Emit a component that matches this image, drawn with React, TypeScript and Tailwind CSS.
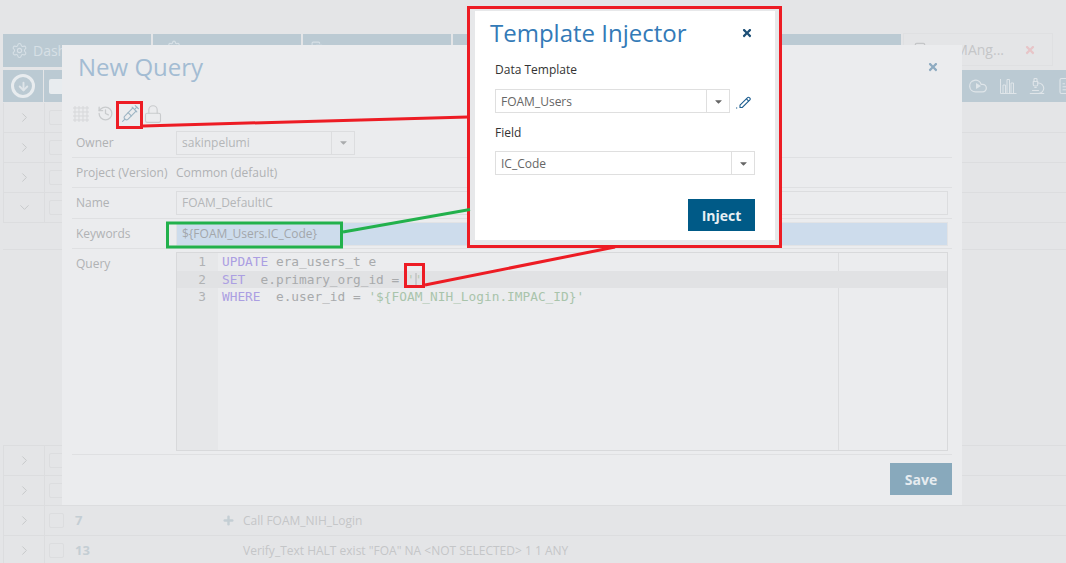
import { Cloud, History, Lock, Microscope, Syringe, FileText, ChevronRight, ChevronDown, ArrowDown, Plus, Settings, Copy } from 'lucide-react';
import { FaCaretDown, FaTimes } from 'react-icons/fa';

const rowsTop = [false, false, false, true];

function Row({ open, children }: { open?: boolean; children?: React.ReactNode }) {
  return (
    <div className="flex h-[30px] shrink-0 border-b border-l border-[#dcdddf]">
      <div className="flex w-[41px] items-center justify-center border-r border-[#dcdddf] text-[#c4c6c8]">
        {open ? <ChevronDown size={15} strokeWidth={1.5} /> : <ChevronRight size={15} strokeWidth={1.5} />}
      </div>
      <div className="flex items-center pl-[4px]">
        <div className="h-[15px] w-[15px] rounded-[2px] border border-[#dcdddf]" />
      </div>
      {children}
    </div>
  );
}

function BarsIcon() {
  return (
    <svg width="18" height="18" viewBox="0 0 18 18" fill="none" stroke="currentColor" strokeWidth="1">
      <path d="M1.5 2v14.5h16" />
      <path d="M4 8h2.5v8.5H4zM8 2.5h2.5v14H8zM12 6h2.5v10.5H12z" />
    </svg>
  );
}

function CloudPlay() {
  return (
    <span className="relative block h-[20px] w-[20px]">
      <Cloud size={20} strokeWidth={1.5} />
      <span className="absolute left-[8px] top-[7px] h-0 w-0 border-y-[3px] border-l-[5px] border-y-transparent border-l-current" />
    </span>
  );
}

function DotGrid() {
  const dots = [];
  for (let y = 0; y < 4; y++) {
    for (let x = 0; x < 4; x++) {
      dots.push(<circle key={`${x}-${y}`} cx={2 + x * 4} cy={2 + y * 4} r="1.2" />);
    }
  }
  return (
    <svg width="16" height="16" viewBox="0 0 16 16" fill="none" stroke="#cfd1d3" strokeWidth="0.8">
      {dots}
    </svg>
  );
}

function PencilIcon() {
  return (
    <svg width="17" height="17" viewBox="0 0 17 17" fill="none" stroke="#1c5d8f" strokeWidth="1.1">
      <path d="M5 12.2L12.6 4.6a1.2 1.2 0 0 1 1.7 0l.6.6a1.2 1.2 0 0 1 0 1.7L7.3 14.5H5z" />
      <path d="M11.4 5.8l2.3 2.3M1 15h1.2" />
    </svg>
  );
}

function Select({ value, width, faded }: { value: string; width: string; faded?: boolean }) {
  return (
    <div className={`flex h-[24px] items-center border ${faded ? 'border-[#dcdddf] text-[#b4b6b8]' : 'border-[#dfdfdf] text-[#666]'} ${width}`}>
      <span className="flex-1 pl-[5px] pt-[1px] text-[12px]">{value}</span>
      <span className={`flex h-full w-[23px] items-center justify-center border-l ${faded ? 'border-[#dcdddf] text-[#a9abad]' : 'border-[#dfdfdf] text-[#666]'}`}>
        <FaCaretDown size={11} />
      </span>
    </div>
  );
}

function FormRow({ label, children, h }: { label: string; children: React.ReactNode; h: string }) {
  return (
    <div className={`flex shrink-0 items-center border-b border-[#dfe0e2] ${h}`}>
      <span className="w-[104px] pl-[4px] text-[12px] text-[#b0b2b4]">{label}</span>
      {children}
    </div>
  );
}

export default function App() {
  return (
    <div className="relative h-[563px] w-[1066px] overflow-hidden bg-[#e4e5e7] font-['Open_Sans',sans-serif]">
      {/* page behind the dialog */}
      <div className="flex h-full flex-col pl-[3px] pt-[34px]">
        <div className="flex h-[33px] shrink-0 gap-[2px] text-[#d7e0e6]">
          <div className="flex w-[148px] items-center gap-[5px] bg-[#bbcad3] pl-[8px] text-[14px]">
            <Settings size={17} strokeWidth={1.5} />
            <span>Dash</span>
          </div>
          <div className="w-[148px] bg-[#bbcad3] pl-[14px] pt-[6px]">
            <Settings size={14} />
          </div>
          <div className="w-[148px] bg-[#bbcad3] pl-[8px] pt-[7px]">
            <Copy size={13} />
          </div>
          <div className="w-[448px] bg-[#bbcad3]" />
          <div className="flex w-[150px] -translate-y-[1px] items-center border border-[#dfe0e2] pl-[10px] text-[14px] text-[#c4c6c8]">
            <Copy size={16} />
            <span className="ml-auto">MAng...</span>
            <FaTimes size={12} className="ml-[20px] mr-[16px] text-[#e7c5c8]" />
          </div>
        </div>
        <div className="mt-[3px] flex h-[32px] shrink-0 items-center bg-[#bbcad3] text-[#dfe5e9]">
          <div className="flex h-full w-[41px] items-center justify-center border-r border-[#e4e5e7]">
            <span className="flex h-[24px] w-[24px] items-center justify-center rounded-full border-[3px] border-[#e8ecef]">
              <ArrowDown size={13} strokeWidth={3.5} />
            </span>
          </div>
          <div className="ml-[5px] h-[15px] w-[15px] rounded-[2px] bg-[#e8ecef]" />
          <div className="-mr-[9px] ml-auto flex items-center gap-[11px]">
            <CloudPlay />
            <BarsIcon />
            <Microscope size={18} strokeWidth={1.5} />
            <FileText size={18} strokeWidth={1.5} />
          </div>
        </div>
        <div className="h-px shrink-0" />
        {rowsTop.map((open, i) => (
          <Row key={i} open={open} />
        ))}
        <div className="h-[27px] shrink-0 border-b border-[#dcdddf]" />
        <div className="h-[196px] shrink-0 border-b border-[#dcdddf]" />
        <Row />
        <Row />
        <Row>
          <span className="ml-[11px] flex h-full w-[147px] items-center text-[13px] font-bold text-[#c4ced4]">7</span>
          <span className="flex h-full items-center">
            <Plus size={13} strokeWidth={4.5} className="text-[#c4ced4]" />
            <span className="ml-[8px] text-[12px] text-[#c4c6c8]">Call FOAM_NIH_Login</span>
          </span>
        </Row>
        <Row>
          <span className="ml-[11px] flex h-full w-[168px] items-center text-[13px] font-bold text-[#c4ced4]">13</span>
          <span className="flex h-full items-center text-[12px] text-[#c4c6c8]">Verify_Text HALT exist "FOA" NA &lt;NOT SELECTED&gt; 1 1 ANY</span>
        </Row>
      </div>

      {/* New Query dialog */}
      <div className="absolute left-[62px] top-[45px] flex h-[460px] w-[900px] flex-col bg-[#ebecee] px-[10px]">
        <div className="flex h-[44px] shrink-0 items-center justify-between pl-[6px] pr-[13px]">
          <h1 className="text-[24px] text-[#a3bcd3]">New Query</h1>
          <FaTimes size={12} className="text-[#8eabc1]" />
        </div>
        <div className="flex h-[39px] shrink-0 items-center pl-[1px] pt-[10px] text-[#c9cbcd]">
          <DotGrid />
          <History size={17} strokeWidth={1.8} className="ml-[8px]" />
          <Syringe size={19} strokeWidth={1.4} className="ml-[7px] text-[#9db5c4]" />
          <Lock size={20} strokeWidth={1.3} className="ml-[3px]" />
        </div>
        <FormRow label="Owner" h="h-[30px]">
          <Select value="sakinpelumi" width="w-[179px]" faded />
        </FormRow>
        <FormRow label="Project (Version)" h="h-[30px]">
          <span className="text-[12px] text-[#b0b2b4]">Common (default)</span>
        </FormRow>
        <FormRow label="Name" h="h-[31px]">
          <div className="mr-[4px] flex h-[24px] flex-1 items-center border border-[#dcdddf] pl-[5px] text-[12px] text-[#b4b6b8]">FOAM_DefaultIC</div>
        </FormRow>
        <FormRow label="Keywords" h="h-[30px]">
          <div className="mr-[4px] flex h-[24px] flex-1 items-center border border-[#e2e3e5] bg-[#cddcec] pl-[5px] text-[12px] text-[#a3a7ab]">{'${FOAM_Users.IC_Code}'}</div>
        </FormRow>
        <div className="flex h-[206px] shrink-0 border-b border-[#dfe0e2] pb-[3px] pt-[3px]">
          <span className="w-[104px] pl-[4px] pt-[3px] text-[12px] text-[#b0b2b4]">Query</span>
          <div className="relative mr-[4px] flex-1 whitespace-pre border border-[#d8d9db] font-['DejaVu_Sans_Mono',monospace] text-[12.8px] leading-[17.5px] text-[#a8aaac]">
            <div className="absolute bottom-0 left-0 top-0 w-[41px] bg-[#e6e7e9]" />
            <div className="absolute bottom-0 right-[108px] top-0 w-px bg-[#dcdddf]" />
            <div className="relative flex">
              <span className="w-[41px] pr-[12px] text-right text-[#b0b2b4]">1</span>
              <span className="pl-[4px]"><span className="text-[#ab9fe2]">UPDATE</span> era_users_t e</span>
            </div>
            <div className="relative flex bg-[#e1e2e4]">
              <span className="w-[41px] pr-[12px] text-right text-[#b0b2b4]">2</span>
              <span className="pl-[4px]"><span className="text-[#ab9fe2]">SET</span>  e.primary_org_id = <span className="text-[#b8c9b4]">'</span><span className="-mr-[2px] inline-block h-[14px] w-[2px] bg-[#c9cacc] align-middle" /><span className="text-[#b8c9b4]">'</span></span>
            </div>
            <div className="relative flex">
              <span className="w-[41px] pr-[12px] text-right text-[#b0b2b4]">3</span>
              <span className="pl-[4px]"><span className="text-[#ab9fe2]">WHERE</span>  e.user_id = <span className="text-[#a9c4ab]">{"'${FOAM_NIH_Login.IMPAC_ID}'"}</span></span>
            </div>
          </div>
        </div>
        <div className="flex justify-end pt-[8px]">
          <button className="h-[32px] w-[62px] bg-[#88a9bc] text-[14px] font-bold text-[#e6ecf0]">Save</button>
        </div>
      </div>

      {/* Template Injector dialog */}
      <div className="absolute left-[467px] top-[6px] h-[242px] w-[315px] border-[3px] border-[#ed1c24] bg-[#e7e8ea] px-[5px] pb-[5px] pt-[2px]">
        <div className="flex h-full w-[300px] flex-col bg-white px-[20px]">
          <div className="flex h-[44px] shrink-0 items-center justify-between pr-[2px]">
            <h2 className="-ml-[5px] text-[24px] text-[#337ab7]">Template Injector</h2>
            <FaTimes size={12} className="text-[#1d4f76]" />
          </div>
          <label className="mt-[6px] text-[12px] leading-[18px] text-[#333]">Data Template</label>
          <div className="mt-[10px] flex items-center gap-[5px]">
            <Select value="FOAM_Users" width="w-[235px]" />
            <PencilIcon />
          </div>
          <label className="mt-[11px] text-[12px] leading-[18px] text-[#333]">Field</label>
          <div className="mt-[9px]">
            <Select value="IC_Code" width="w-[260px]" />
          </div>
          <div className="mt-[24px] flex justify-end">
            <button className="h-[32px] w-[67px] bg-[#005a87] text-[14px] font-bold text-[#e8f0f4]">Inject</button>
          </div>
        </div>
      </div>

      {/* callouts */}
      <svg className="pointer-events-none absolute left-0 top-0" width="1066" height="563" fill="none" strokeWidth="3">
        <rect x="117.5" y="102.5" width="24" height="25" stroke="#ed1c24" />
        <path d="M143 126L468 117" stroke="#ed1c24" />
        <rect x="167.5" y="223" width="174" height="24" stroke="#22b14c" />
        <path d="M343 232L470 209.5" stroke="#22b14c" />
        <rect x="405.5" y="264.5" width="18" height="22" stroke="#ed1c24" />
        <path d="M425 285L615 247" stroke="#ed1c24" />
      </svg>
    </div>
  );
}
